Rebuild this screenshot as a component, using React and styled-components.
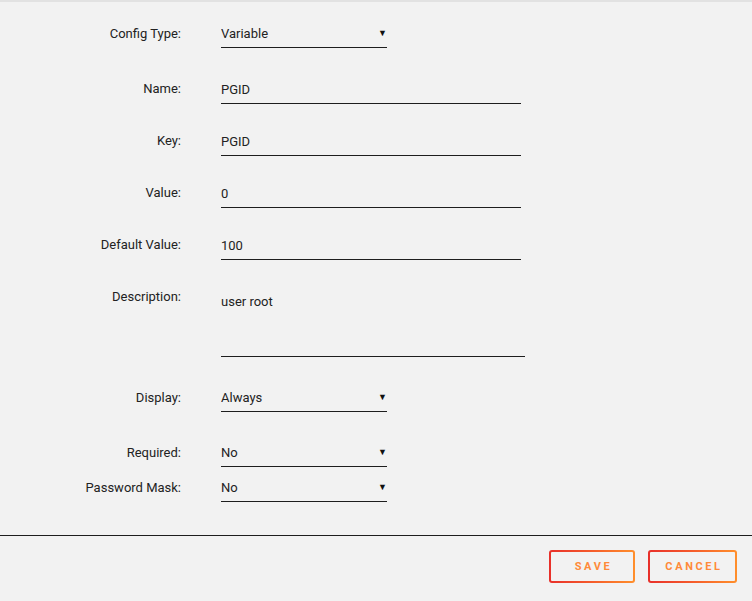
import React from "react";
import styled, { createGlobalStyle } from "styled-components";

const Global = createGlobalStyle`
  html, body { margin: 0; padding: 0; background: #f2f2f2; }
  body { font-family: Roboto, "Liberation Sans", sans-serif; color: #222; }
  * { box-sizing: border-box; }
`;

const Page = styled.div`
  width: 752px;
  height: 601px;
  background: #f2f2f2;
  border-top: 2px solid #e2e2e2;
  display: flex;
  flex-direction: column;
  overflow: hidden;
`;

const Form = styled.form`
  display: flex;
  flex-direction: column;
  padding-top: 24px;
`;

const Row = styled.div`
  display: grid;
  grid-template-columns: 181px auto;
  column-gap: 40px;
  align-items: start;
  margin-top: ${(p) => p.$gap || 0}px;
`;

const Label = styled.label`
  text-align: right;
  font-size: 13px;
  line-height: 16px;
  color: #222;
  white-space: nowrap;
`;

const FieldBase = `
  display: block;
  margin: 0;
  border: 0;
  border-bottom: 1px solid #1e1e1e;
  background: transparent;
  font-family: Roboto, "Liberation Sans", sans-serif;
  font-size: 13px;
  line-height: 16px;
  color: #222;
  padding: 0;
  outline: none;
  border-radius: 0;
`;

const TextInput = styled.input`
  ${FieldBase}
  width: 300px;
  height: 23px;
  padding-bottom: 6px;
`;

const TextArea = styled.textarea`
  ${FieldBase}
  width: 304px;
  height: 68px;
  padding-top: 5px;
  resize: none;
  overflow: hidden;
`;

const SelectWrap = styled.div`
  position: relative;
  width: 166px;
`;

const Select = styled.select`
  ${FieldBase}
  width: 166px;
  height: 22px;
  padding-bottom: 5px;
  appearance: none;
  -webkit-appearance: none;
`;

const Caret = styled.span`
  position: absolute;
  right: 0;
  top: 3px;
  font-size: 9px;
  line-height: 9px;
  color: #111;
  pointer-events: none;
`;

const Divider = styled.hr`
  margin: 33px 0 0;
  border: 0;
  height: 1px;
  background: #1e1e1e;
`;

const Actions = styled.div`
  display: flex;
  justify-content: flex-end;
  gap: 13px;
  padding: 14px 15px 0 0;
`;

const Button = styled.button`
  width: ${(p) => p.$w}px;
  height: 33px;
  border: 2px solid transparent;
  border-radius: 3px;
  background:
    linear-gradient(#f2f2f2, #f2f2f2) padding-box,
    linear-gradient(90deg, #e8302a 0%, #f4572c 45%, #ff8f2c 100%) border-box;
  color: #ff8a3a;
  font-family: Roboto, "Liberation Sans", sans-serif;
  font-weight: 700;
  font-size: 11px;
  letter-spacing: 2.6px;
  padding: 0 0 0 3px;
  text-transform: uppercase;
  cursor: pointer;
`;

function SelectField({ value, options }) {
  return (
    <SelectWrap>
      <Select defaultValue={value}>
        {options.map((o) => (
          <option key={o}>{o}</option>
        ))}
      </Select>
      <Caret>▼</Caret>
    </SelectWrap>
  );
}

export default function App() {
  return (
    <Page>
      <Global />
      <Form onSubmit={(e) => e.preventDefault()}>
        <Row>
          <Label>Config Type:</Label>
          <SelectField value="Variable" options={["Variable", "Path", "Port", "Device", "Label"]} />
        </Row>
        <Row $gap={33}>
          <Label>Name:</Label>
          <TextInput defaultValue="PGID" />
        </Row>
        <Row $gap={29}>
          <Label>Key:</Label>
          <TextInput defaultValue="PGID" />
        </Row>
        <Row $gap={29}>
          <Label>Value:</Label>
          <TextInput defaultValue="0" />
        </Row>
        <Row $gap={29}>
          <Label>Default Value:</Label>
          <TextInput defaultValue="100" />
        </Row>
        <Row $gap={29}>
          <Label>Description:</Label>
          <TextArea defaultValue="user root" />
        </Row>
        <Row $gap={33}>
          <Label>Display:</Label>
          <SelectField value="Always" options={["Always", "Advanced", "Hidden"]} />
        </Row>
        <Row $gap={33}>
          <Label>Required:</Label>
          <SelectField value="No" options={["No", "Yes"]} />
        </Row>
        <Row $gap={13}>
          <Label>Password Mask:</Label>
          <SelectField value="No" options={["No", "Yes"]} />
        </Row>
      </Form>
      <Divider />
      <Actions>
        <Button $w={86}>Save</Button>
        <Button $w={89}>Cancel</Button>
      </Actions>
    </Page>
  );
}
